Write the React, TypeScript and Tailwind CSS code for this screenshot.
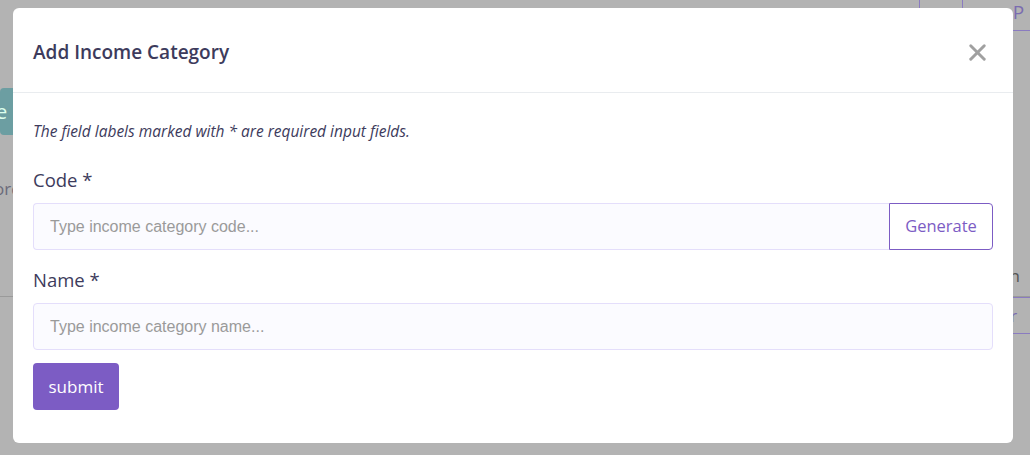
import React, { useState } from 'react';
import { X } from 'lucide-react';

const BackgroundPage = () => (
  <div className="flex h-full w-full flex-col text-[#5a5a78]">
    {/* top toolbar */}
    <div className="flex h-[31px] justify-end">
      <div className="w-[43px] border-l border-[#8a7bc0]" />
      <div className="w-[20px] border-l border-[#8a7bc0]" />
      <div className="flex w-[48px] items-start gap-[6px] border-b border-[#8a7bc0] pl-[17px] text-[19px] leading-[24px] text-[#7a6cb0]">
        <span className="mt-[1px] text-[13px]">○</span>
        <span>P</span>
      </div>
    </div>
    <div className="mt-[57px] h-[47px] w-[40px] rounded bg-[#6c9ea2] text-[20px] leading-[47px] text-[#dfe]">
      <span className="-ml-[4px]">e</span>
    </div>
    <div className="mt-[42px] text-[17px] leading-[24px] text-[#6a6a7a]">
      <span className="-ml-[6px]">ord</span>
    </div>
    <div className="mt-[62px] flex justify-end text-[17px] text-[#555]">
      <span className="mr-[10px]">n</span>
    </div>
    <div className="mt-[7px] border-t border-[#9a9a9a]" />
    <div className="flex justify-end">
      <div className="w-[30px] border-y border-[#8a7bc0] py-[5px] text-[17px] text-[#7a6cb0]">or</div>
    </div>
  </div>
);

const App = () => {
  const [code, setCode] = useState('');
  const [name, setName] = useState('');

  const generate = () => {
    setCode(String(Math.floor(10000000 + Math.random() * 89999999)));
  };

  return (
    <div className="relative h-[455px] w-[1030px] overflow-hidden bg-[#b3b3b3] font-['Open_Sans',sans-serif]">
      <BackgroundPage />

      {/* Modal */}
      <div className="absolute inset-0 pl-[13px] pt-[8px]">
        <div className="w-[1000px] rounded-md bg-white">
          <div className="flex h-[85px] items-center justify-between border-b border-[#e9ecef] pl-5 pr-[22px] pt-[4px]">
            <h2 className="text-[19px] font-semibold text-[#3d3b5c]">Add Income Category</h2>
            <button className="text-[#a0a0a0]">
              <X size={27} strokeWidth={2.6} />
            </button>
          </div>

          <form className="px-5 pb-[33px] pt-[27px]" onSubmit={(e) => e.preventDefault()}>
            <p className="text-[15.5px] italic leading-[22px] text-[#3d3b5c]">
              The field labels marked with * are required input fields.
            </p>

            <label className="mt-[24px] block text-[18.5px] leading-[28px] text-[#3d3b5c]">Code *</label>
            <div className="mt-[9px] flex">
              <input
                value={code}
                onChange={(e) => setCode(e.target.value)}
                placeholder="Type income category code..."
                className="h-[47px] flex-1 rounded-l-[4px] border border-r-0 border-[#e4defb] bg-[#fbfbff] px-4 font-['Liberation_Sans',sans-serif] text-[16px] text-[#3d3b5c] placeholder:text-[#9a9a9a] focus:outline-none"
              />
              <button
                type="button"
                onClick={generate}
                className="h-[47px] w-[104px] rounded-r-[4px] border border-[#7c5cc4] bg-white text-[16.5px] text-[#7c5cc4]"
              >
                Generate
              </button>
            </div>

            <label className="mt-[16px] block text-[18.5px] leading-[28px] text-[#3d3b5c]">Name *</label>
            <input
              value={name}
              onChange={(e) => setName(e.target.value)}
              placeholder="Type income category name..."
              className="mt-[9px] h-[47px] w-full rounded-[4px] border border-[#e4defb] bg-[#fbfbff] px-4 font-['Liberation_Sans',sans-serif] text-[16px] text-[#3d3b5c] placeholder:text-[#9a9a9a] focus:outline-none"
            />

            <button
              type="submit"
              className="mt-[13px] h-[47px] w-[86px] rounded-[4px] bg-[#7c5cc4] text-[17px] text-white"
            >
              submit
            </button>
          </form>
        </div>
      </div>
    </div>
  );
};

export default App;
